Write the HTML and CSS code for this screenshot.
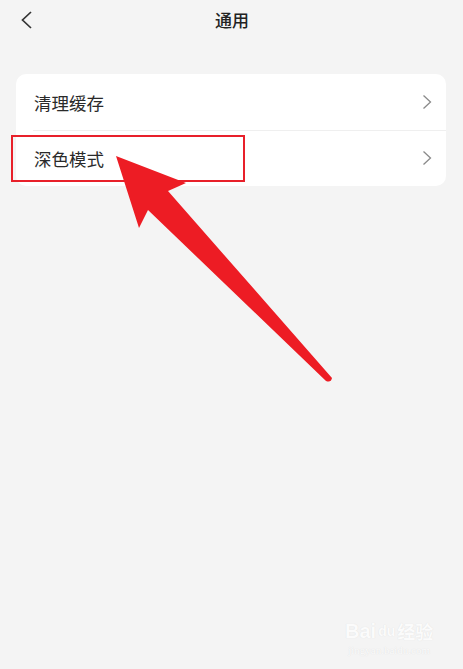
FILE: index.html
```html
<!DOCTYPE html>
<html lang="zh">
<head>
<meta charset="utf-8">
<link rel="stylesheet" href="styles.css">
</head>
<body>
<div class="page">
  <header class="nav">
    <svg class="back" width="14" height="20" viewBox="0 0 14 20"><path d="M11 2 L2.5 10 L11 18" fill="none" stroke="#333" stroke-width="1.7"/></svg>
    <div class="title">通用</div>
  </header>
  <section class="card">
    <div class="row">
      <span class="label">清理缓存</span>
      <svg class="chev" width="10" height="16" viewBox="0 0 10 16"><path d="M1.5 1.5 L8.5 8 L1.5 14.5" fill="none" stroke="#8a8a8a" stroke-width="1.3"/></svg>
    </div>
    <div class="row">
      <span class="label">深色模式</span>
      <svg class="chev" width="10" height="16" viewBox="0 0 10 16"><path d="M1.5 1.5 L8.5 8 L1.5 14.5" fill="none" stroke="#8a8a8a" stroke-width="1.3"/></svg>
    </div>
  </section>
  <div class="highlight"></div>
  <svg class="arrow" width="463" height="669" viewBox="0 0 463 669">
    <path d="M116 156 L186 183 L168 191 L332 378 Q331 383 326 381 L148 210 L139 228 Z" fill="#ed1c24"/>
  </svg>
  <div class="watermark">
    <div class="wm-top"><span class="wm-bai">Bai</span><span class="wm-du">du</span><span class="wm-jy">经验</span></div>
    <div class="wm-url">jingyan.baidu.com</div>
  </div>
</div>
</body>
</html>
```
FILE: styles.css
```css
* { box-sizing: border-box; }
html, body { margin: 0; padding: 0; }
body {
  background: #f4f4f4;
  font-family: "Noto Sans CJK SC", "Noto Sans", sans-serif;
  color: #222;
}
.page {
  position: relative;
  width: 463px;
  height: 669px;
  overflow: hidden;
}
.nav {
  position: relative;
  height: 40px;
  display: flex;
  align-items: center;
  justify-content: center;
}
.back {
  position: absolute;
  left: 20px;
  top: 10px;
}
.title {
  font-size: 17px;
  font-weight: 500;
  color: #222;
  line-height: 40px;
  margin-left: 1px;
}
.card {
  margin: 34px 17px 0 16px;
  background: #fff;
  border-radius: 10px;
}
.row {
  height: 56px;
  display: flex;
  align-items: center;
  justify-content: space-between;
  padding: 0 14px 0 18px;
  position: relative;
}
.row + .row::before {
  content: "";
  position: absolute;
  left: 17px;
  right: 0;
  top: 0;
  height: 1px;
  background: #efefef;
}
.label {
  font-size: 17.5px;
  color: #2a2a2a;
}
.highlight {
  position: absolute;
  left: 11px;
  top: 135px;
  width: 234px;
  height: 47px;
  border: 2px solid #e8202a;
}
.arrow {
  position: absolute;
  left: 0;
  top: 0;
}
.watermark {
  position: absolute;
  left: 345px;
  top: 618px;
  color: #fbfbfb;
  text-align: center;
}
.wm-top {
  font-family: "Liberation Sans", sans-serif;
  font-size: 20px;
  font-weight: bold;
  display: flex;
  align-items: center;
  gap: 2px;
  text-shadow: 0 0 1px #dcdcdc;
}
.wm-du { font-size: 14px; }
.wm-jy { font-family: "Noto Sans CJK SC", sans-serif; font-size: 18px; }
.wm-url {
  font-family: "Liberation Serif", serif;
  font-size: 11px;
  text-shadow: 0 0 1px #d8d8d8;
}
```
